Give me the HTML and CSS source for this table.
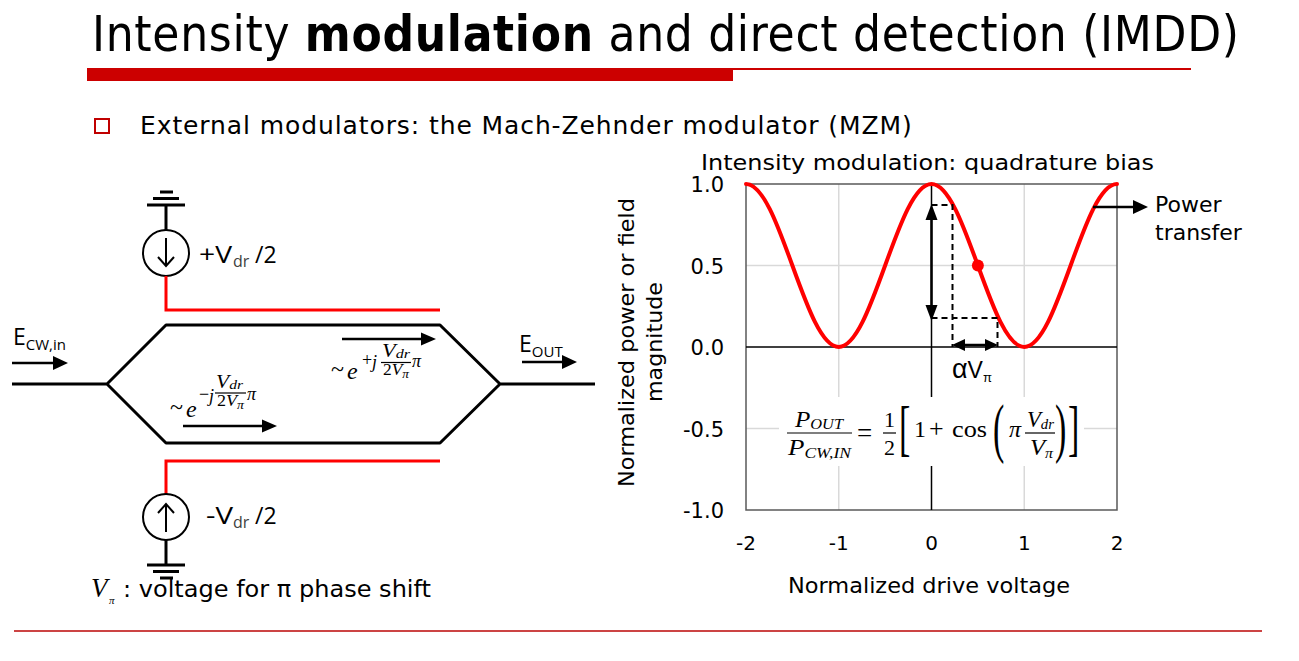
FILE: index.html
```html
<!DOCTYPE html>
<html lang="en">
<head>
<meta charset="utf-8">
<title>Intensity modulation and direct detection (IMDD)</title>
<link rel="stylesheet" href="styles.css">
</head>
<body>
<div class="slide">
  <header class="title-block">
    <h1 class="title">Intensity <b>modulation</b> and direct detection (IMDD)</h1>
    <div class="rule"><span class="rule-thick"></span><span class="rule-thin"></span></div>
  </header>

  <div class="bullet">
    <span class="bullet-box"></span>
    <span class="bullet-text">External modulators: the Mach-Zehnder modulator (MZM)</span>
  </div>

  <div class="figures">
    <svg class="mzm" width="600" height="460" viewBox="0 145 600 460" xmlns="http://www.w3.org/2000/svg">
      <g class="wire">
        <line x1="160" y1="192" x2="173" y2="192"/>
        <line x1="153" y1="198.5" x2="179" y2="198.5"/>
        <line x1="147" y1="205" x2="185" y2="205"/>
        <line x1="166" y1="205" x2="166" y2="230"/>
      </g>
      <circle class="src" cx="166" cy="253" r="23"/>
      <path class="src-arrow" d="M166,238 V266 M158,257 L166,266 L174,257"/>
      <path class="red-wire" d="M166,276 V310 H440"/>

      <path class="guide" d="M12,384 H107 L166,325 H440 L500,384 H595 M107,384 L166,443 H440 L500,384"/>

      <path class="red-wire" d="M440,461 H166 V494"/>
      <circle class="src" cx="166" cy="517" r="23"/>
      <path class="src-arrow" d="M166,532 V505 M158,513 L166,504 L174,513"/>
      <g class="wire">
        <line x1="166" y1="540" x2="166" y2="565"/>
        <line x1="147" y1="565" x2="185" y2="565"/>
        <line x1="153" y1="571.5" x2="179" y2="571.5"/>
        <line x1="160" y1="578" x2="173" y2="578"/>
      </g>

      <g class="arrow">
        <line x1="12" y1="363" x2="56" y2="363"/>
        <polygon points="53,356 68,363 53,370"/>
        <line x1="522" y1="362" x2="565" y2="362"/>
        <polygon points="562,355 577,362 562,369"/>
        <line x1="342" y1="339" x2="424" y2="339"/>
        <polygon points="421,332.5 436,339 421,345.5"/>
        <line x1="183" y1="426" x2="265" y2="426"/>
        <polygon points="262,419.5 277,426 262,432.5"/>
      </g>

      <text class="sans lbl" x="199" y="263" textLength="33" lengthAdjust="spacingAndGlyphs">+V</text>
      <text class="sans lbl-sub" x="233" y="267">dr</text>
      <text class="sans lbl" x="255" y="263">/2</text>
      <text class="sans lbl" x="206" y="524" textLength="27" lengthAdjust="spacingAndGlyphs">-V</text>
      <text class="sans lbl-sub" x="233" y="528">dr</text>
      <text class="sans lbl" x="255" y="524">/2</text>

      <text class="sans elbl" x="13" y="345">E<tspan class="esub" dy="5">CW,in</tspan></text>
      <text class="sans elbl" x="519" y="352">E<tspan class="esub" dy="5">OUT</tspan></text>

      <!-- upper phase term -->
      <text class="math m-base" x="331" y="377">~</text>
      <text class="math m-base it" x="347" y="379">e</text>
      <text class="math m-exp" x="362" y="366">+</text>
      <text class="math m-exp it" x="372" y="368">j</text>
      <text class="math m-frac it" x="382" y="357" textLength="28" lengthAdjust="spacingAndGlyphs">V<tspan class="m-fsub" dy="1">dr</tspan></text>
      <line class="fbar" x1="381" y1="362.5" x2="411" y2="362.5"/>
      <text class="math m-den it" x="383" y="375" textLength="26" lengthAdjust="spacingAndGlyphs"><tspan class="up">2</tspan>V<tspan class="m-fsub" dy="3">π</tspan></text>
      <text class="math m-exp it" x="412" y="367">π</text>

      <!-- lower phase term -->
      <text class="math m-base" x="170" y="415">~</text>
      <text class="math m-base it" x="186" y="417">e</text>
      <text class="math m-exp" x="199" y="400">−</text>
      <text class="math m-exp it" x="209" y="402">j</text>
      <text class="math m-frac it" x="216" y="388" textLength="27" lengthAdjust="spacingAndGlyphs">V<tspan class="m-fsub" dy="1">dr</tspan></text>
      <line class="fbar" x1="215" y1="393" x2="246" y2="393"/>
      <text class="math m-den it" x="217" y="406" textLength="27" lengthAdjust="spacingAndGlyphs"><tspan class="up">2</tspan>V<tspan class="m-fsub" dy="3">π</tspan></text>
      <text class="math m-exp it" x="247" y="400">π</text>

      <!-- footnote -->
      <text class="math it vpi" x="91" y="597">V</text>
      <text class="math it vpi-sub" x="109" y="604">π</text>
      <text class="tahoma note" x="123" y="597" textLength="308" lengthAdjust="spacingAndGlyphs">: voltage for π phase shift</text>
    </svg>

    <svg class="chart" width="699" height="460" viewBox="600 145 699 460" xmlns="http://www.w3.org/2000/svg">
      <text class="tahoma ctitle" x="701" y="170" textLength="453" lengthAdjust="spacingAndGlyphs">Intensity modulation: quadrature bias</text>

      <g class="grid">
        <line x1="838.75" y1="184" x2="838.75" y2="510"/>
        <line x1="1024.25" y1="184" x2="1024.25" y2="510"/>
        <line x1="746" y1="265.5" x2="1117" y2="265.5"/>
        <line x1="746" y1="428.5" x2="1117" y2="428.5"/>
      </g>
      <rect class="frame" x="746" y="184" width="371" height="326"/>
      <g class="axis">
        <line x1="931.5" y1="184" x2="931.5" y2="510"/>
        <line x1="746" y1="347" x2="1117" y2="347"/>
      </g>
      <rect class="eq-bg" x="779" y="397" width="305" height="69"/>

      <g class="ytick">
        <text x="724" y="192">1.0</text>
        <text x="724" y="273.5">0.5</text>
        <text x="724" y="355">0.0</text>
        <text x="724" y="436.5">-0.5</text>
        <text x="724" y="518">-1.0</text>
      </g>
      <g class="xtick">
        <text x="746" y="550">-2</text>
        <text x="838.75" y="550">-1</text>
        <text x="931.5" y="550">0</text>
        <text x="1024.25" y="550">1</text>
        <text x="1117" y="550">2</text>
      </g>
      <text class="atitle" x="788" y="593" textLength="282" lengthAdjust="spacingAndGlyphs">Normalized drive voltage</text>
      <text class="atitle mid" x="634" y="342.5" transform="rotate(-90 634 342.5)" textLength="289" lengthAdjust="spacingAndGlyphs">Normalized power or field</text>
      <text class="atitle mid" x="662" y="342" transform="rotate(-90 662 342)" textLength="120" lengthAdjust="spacingAndGlyphs">magnitude</text>

      <path class="curve" d="M746,184 C762.78,184 777.25,223.75 792.375,265.5 C807.5,307.25 821.97,347 838.75,347 C855.53,347 870,307.25 885.125,265.5 C900.25,223.75 914.72,184 931.5,184 C948.28,184 962.75,223.75 977.875,265.5 C993,307.25 1007.47,347 1024.25,347 C1041.03,347 1055.5,307.25 1070.625,265.5 C1085.75,223.75 1100.22,184 1117,184"/>
      <circle class="dot" cx="977.875" cy="265.5" r="6"/>

      <path class="dash" d="M931.5,205 H952.5 V347 M931.5,318 H997.5 V347"/>
      <g class="arrow">
        <line x1="931.5" y1="214" x2="931.5" y2="311"/>
        <polygon points="925.5,220 931.5,204 937.5,220"/>
        <polygon points="925.5,305 931.5,321 937.5,305"/>
        <line x1="960" y1="345" x2="990" y2="345"/>
        <polygon points="952,345 965,339 965,351"/>
        <polygon points="998,345 985,339 985,351"/>
        <line x1="1093" y1="207" x2="1136" y2="207"/>
        <polygon points="1133,200 1148,207 1133,214"/>
      </g>
      <text class="arial avpi" x="952" y="378"><tspan class="alpha">α</tspan>V<tspan class="avpi-sub" dy="4">π</tspan></text>

      <text class="ptl" x="1155" y="212">Power</text>
      <text class="ptl" x="1155" y="240">transfer</text>

      <!-- transfer equation -->
      <g class="eq">
        <text class="it eq-v" x="795" y="427" textLength="48" lengthAdjust="spacingAndGlyphs">P<tspan class="eq-sub" dy="2">OUT</tspan></text>
        <line class="fbar" x1="787" y1="433" x2="852" y2="433"/>
        <text class="it eq-v" x="788" y="455" textLength="63" lengthAdjust="spacingAndGlyphs">P<tspan class="eq-sub" dy="3">CW,IN</tspan></text>
        <text class="eq-eq" x="857" y="442">=</text>
        <text class="eq-n" x="884" y="427">1</text>
        <line class="fbar" x1="883" y1="433" x2="896" y2="433"/>
        <text class="eq-n" x="884" y="455">2</text>
        <text class="eq-brk" transform="translate(899 448.5) scale(1 1.8)">[</text>
        <text class="eq-op" x="914" y="437">1</text>
        <text class="eq-plus" x="929" y="437">+</text>
        <text class="eq-op" x="952" y="437" textLength="35" lengthAdjust="spacingAndGlyphs">cos</text>
        <text class="eq-brk" transform="translate(993 449.5) scale(1 1.9)">(</text>
        <text class="it eq-op" x="1009" y="437">π</text>
        <text class="it eq-v" x="1027" y="427" textLength="27" lengthAdjust="spacingAndGlyphs">V<tspan class="eq-sub" dy="2">dr</tspan></text>
        <line class="fbar" x1="1025" y1="433" x2="1055" y2="433"/>
        <text class="it eq-v" x="1030" y="455" textLength="23" lengthAdjust="spacingAndGlyphs">V<tspan class="eq-sub" dy="3">π</tspan></text>
        <text class="eq-brk" transform="translate(1055 449.5) scale(1 1.9)">)</text>
        <text class="eq-brk" transform="translate(1068 448.5) scale(1 1.8)">]</text>
      </g>
    </svg>
  </div>

  <div class="footer-rule"></div>
</div>
</body>
</html>
```

FILE: styles.css
```css
* { box-sizing: border-box; }
html, body { margin: 0; padding: 0; background: #fff; }
body {
  width: 1299px;
  height: 661px;
  overflow: hidden;
  font-family: "DejaVu Sans", Verdana, sans-serif;
  color: #000;
}
.slide { width: 1299px; height: 661px; }

.title-block { padding-top: 5px; }
.title {
  margin: 0 0 0 92px;
  font-weight: normal;
  font-size: 49px;
  line-height: 60px;
  font-stretch: condensed;
  letter-spacing: 0.7px;
  white-space: nowrap;
}
.title b { font-weight: bold; }
.rule { display: flex; margin: 3px 0 0 87px; height: 13px; }
.rule-thick { width: 646px; height: 13px; background: #cc0000; }
.rule-thin { width: 458px; height: 2px; background: #cc0000; }

.bullet {
  display: flex;
  align-items: center;
  margin: 30px 0 0 94px;
  height: 30px;
}
.bullet-box {
  width: 16px;
  height: 16px;
  border: 2.5px solid #c00000;
  flex: none;
}
.bullet-text {
  margin-left: 30px;
  font-size: 25px;
  letter-spacing: 0.9px;
  line-height: 30px;
  white-space: nowrap;
}

.figures { display: flex; margin-top: 4px; height: 460px; }
.mzm, .chart { display: block; flex: none; }

.footer-rule {
  margin: 25px 0 0 14px;
  width: 1248px;
  height: 2px;
  background: #cc4444;
}

.wire line { stroke: #000; stroke-width: 3; }
.src { fill: none; stroke: #000; stroke-width: 2; }
.src-arrow { fill: none; stroke: #000; stroke-width: 2; }
.red-wire { fill: none; stroke: #ff0000; stroke-width: 3; }
.guide { fill: none; stroke: #000; stroke-width: 3; stroke-linejoin: round; }
.arrow line { stroke: #000; stroke-width: 2.5; }
.arrow polygon { fill: #000; }
.fbar { stroke: #000; stroke-width: 1.2; }

.sans { font-family: "Open Sans", "DejaVu Sans", sans-serif; }
.tahoma { font-family: "DejaVu Sans", Verdana, sans-serif; }
.arial { font-family: "Liberation Sans", Arial, sans-serif; }
.math { font-family: "Liberation Serif", "DejaVu Serif", serif; }
.it { font-style: italic; }
.up { font-style: normal; }

.lbl { font-size: 23px; fill: #000; }
.lbl-sub { font-size: 16px; fill: #404040; }
.elbl { font-size: 23px; }
.esub { font-size: 15px; }

.m-base { font-size: 24px; }
.m-exp { font-size: 18px; }
.m-frac { font-size: 18px; }
.m-den { font-size: 17px; }
.m-fsub { font-size: 13px; }

.vpi { font-size: 27px; }
.vpi-sub { font-size: 11px; }
.note { font-size: 23px; }

.ctitle { font-size: 22px; }
.grid line { stroke: #d9d9d9; stroke-width: 1.5; }
.frame { fill: none; stroke: #595959; stroke-width: 1.5; }
.axis line { stroke: #000; stroke-width: 1.5; }
.eq-bg { fill: #fff; }
.ytick text { font-family: "DejaVu Sans", Verdana, sans-serif; font-size: 21px; text-anchor: end; }
.xtick text { font-family: "DejaVu Sans", Verdana, sans-serif; font-size: 20px; text-anchor: middle; }
.atitle { font-family: "DejaVu Sans", Verdana, sans-serif; font-size: 21px; }
.mid { text-anchor: middle; }
.curve { fill: none; stroke: #ff0000; stroke-width: 4; stroke-linecap: round; }
.dot { fill: #ff0000; }
.dash { fill: none; stroke: #000; stroke-width: 2; stroke-dasharray: 6 4; }
.avpi { font-size: 23px; }
.alpha { font-size: 27px; }
.avpi-sub { font-size: 13px; }
.ptl { font-family: "DejaVu Sans", Verdana, sans-serif; font-size: 22px; }

.eq text { font-family: "Liberation Serif", "DejaVu Serif", serif; }
.eq-v { font-size: 23px; }
.eq-sub { font-size: 15px; }
.eq-n { font-size: 22px; }
.eq-op { font-size: 24px; }
.eq-eq { font-size: 27px; }
.eq-plus { font-size: 26px; }
.eq-brk { font-size: 34px; }
```
